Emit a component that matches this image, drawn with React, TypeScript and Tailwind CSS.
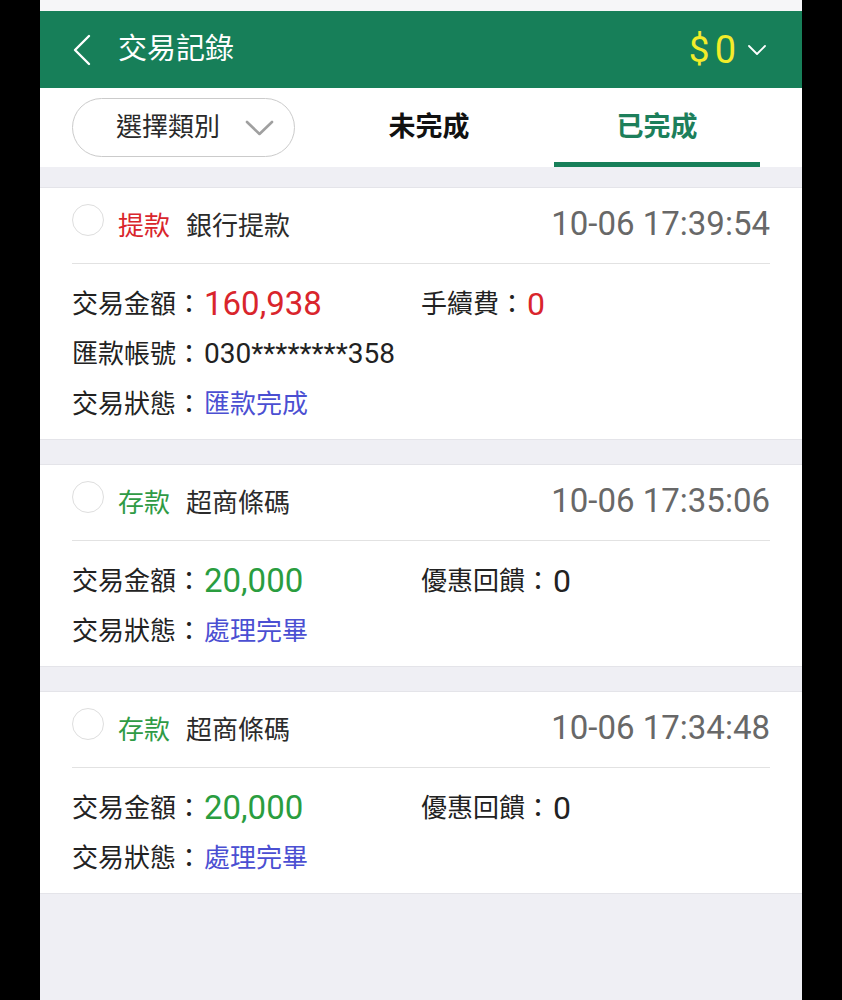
import { ReactNode } from "react";

type Tx = {
  kind: string;
  kindColor: string;
  method: string;
  time: string;
  amount: string;
  amountColor: string;
  sideLabel: string;
  sideValue: string;
  sideColor: string;
  account?: string;
  status: string;
};

const records: Tx[] = [
  {
    kind: "提款",
    kindColor: "text-[#d9252c]",
    method: "銀行提款",
    time: "10-06 17:39:54",
    amount: "160,938",
    amountColor: "text-[#d9252c]",
    sideLabel: "手續費：",
    sideValue: "0",
    sideColor: "text-[#d9252c]",
    account: "030********358",
    status: "匯款完成",
  },
  {
    kind: "存款",
    kindColor: "text-[#2f9b45]",
    method: "超商條碼",
    time: "10-06 17:35:06",
    amount: "20,000",
    amountColor: "text-[#2a9d3f]",
    sideLabel: "優惠回饋：",
    sideValue: "0",
    sideColor: "text-[#222222]",
    status: "處理完畢",
  },
  {
    kind: "存款",
    kindColor: "text-[#2f9b45]",
    method: "超商條碼",
    time: "10-06 17:34:48",
    amount: "20,000",
    amountColor: "text-[#2a9d3f]",
    sideLabel: "優惠回饋：",
    sideValue: "0",
    sideColor: "text-[#222222]",
    status: "處理完畢",
  },
];

function Row({ children }: { children: ReactNode }) {
  return <div className="flex h-[50px] items-center">{children}</div>;
}

function Card({ tx }: { tx: Tx }) {
  return (
    <div className="border-y border-[#e4e4e9] bg-white px-[32px]">
      <div className="flex items-start pt-[16px] pb-[17px]">
        <span className="h-[32px] w-[32px] shrink-0 rounded-full border-[1.5px] border-[#dedede]" />
        <div className="ml-[14px] mt-[2px] flex h-[40px] items-center">
          <span className={`text-[26px] ${tx.kindColor}`}>{tx.kind}</span>
          <span className="ml-[16px] text-[26px] text-[#2b2b2b]">{tx.method}</span>
        </div>
        <span className="ml-auto flex h-[40px] items-center text-[33px] text-[#686868]">{tx.time}</span>
      </div>
      <div className="h-px bg-[#e2e2e2]" />
      <div className="pt-[15px] pb-[10px] text-[26px] text-[#222222]">
        <div className="grid grid-cols-2">
          <Row>
            交易金額：<span className={`ml-[2px] text-[33px] ${tx.amountColor}`}>{tx.amount}</span>
          </Row>
          <Row>
            {tx.sideLabel}
            <span className={`ml-[2px] text-[32px] ${tx.sideColor}`}>{tx.sideValue}</span>
          </Row>
        </div>
        {tx.account && (
          <Row>
            匯款帳號：<span className="ml-[2px] text-[28px]">{tx.account}</span>
          </Row>
        )}
        <Row>
          交易狀態：<span className="ml-[2px] text-[#4b4fd2]">{tx.status}</span>
        </Row>
      </div>
    </div>
  );
}

export default function App() {
  return (
    <div
      className="flex h-[1000px] w-full justify-center overflow-hidden bg-black"
      style={{ fontFamily: 'Roboto, "Noto Sans CJK TC", "Noto Sans", sans-serif' }}
    >
      <div className="flex w-[762px] flex-col bg-[#efeff4]">
        <div className="h-[11px] bg-[#f6f6f8]" />
        <header className="flex h-[77px] items-center bg-[#177f59] pl-[32px] pr-[35px]">
          <svg width="19" height="32" viewBox="0 0 19 32" fill="none">
            <polyline points="17,2 3,16 17,30" stroke="#ffffff" strokeWidth="2.4" strokeLinecap="round" strokeLinejoin="round" />
          </svg>
          <h1 className="ml-[27px] text-[29px] text-white">交易記錄</h1>
          <div className="ml-auto flex items-center">
            <span className="text-[37px] leading-none text-[#f2ec2a]">$</span>
            <span className="ml-[5px] text-[38px] leading-none text-[#f2ec2a]">0</span>
            <svg className="ml-[11px]" width="20" height="12" viewBox="0 0 20 12" fill="none">
              <polyline points="2,2 10,10 18,2" stroke="#ffffff" strokeWidth="1.8" strokeLinecap="round" strokeLinejoin="round" />
            </svg>
          </div>
        </header>

        <nav className="flex h-[79px] items-center bg-white pl-[32px]">
          <div className="flex h-[59px] w-[223px] items-center rounded-full border-[1.5px] border-[#cbcbcb] pl-[43px]">
            <span className="text-[26px] text-[#2a2a2a]">選擇類別</span>
            <svg className="ml-[25px]" width="29" height="16" viewBox="0 0 29 16" fill="none">
              <polyline points="2,2 14.5,14 27,2" stroke="#a0a0a0" strokeWidth="2.6" strokeLinecap="round" strokeLinejoin="round" />
            </svg>
          </div>
          <div className="ml-[20px] flex h-full">
            <div className="flex w-[228px] items-center justify-center text-[27px] font-bold text-[#111111]">未完成</div>
            <div className="relative flex w-[228px] items-center justify-center text-[27px] font-bold text-[#1d7f5b]">
              已完成
              <span className="absolute bottom-0 left-[11px] right-[11px] h-[5px] bg-[#177f59]" />
            </div>
          </div>
        </nav>

        <main className="flex flex-col gap-[24px] pt-[20px]">
          {records.map((tx, i) => (
            <Card key={i} tx={tx} />
          ))}
        </main>
      </div>
    </div>
  );
}
